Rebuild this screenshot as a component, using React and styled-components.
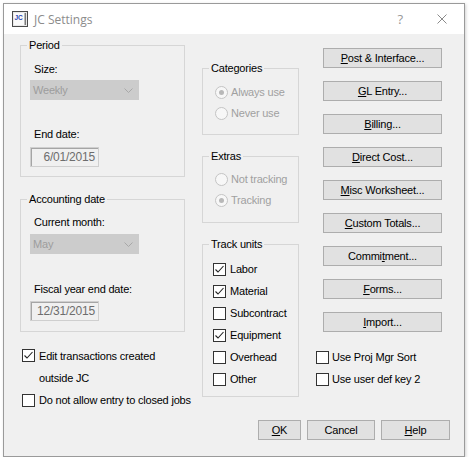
import React from 'react';
import styled, { createGlobalStyle } from 'styled-components';

const GlobalStyle = createGlobalStyle`
  html, body {
    margin: 0;
    padding: 0;
    background: #ffffff;
  }
  body {
    font-family: "Liberation Sans", Arial, sans-serif;
    font-size: 11px;
    letter-spacing: -0.2px;
    color: #000;
  }
`;

const Window = styled.div`
  margin: 3px 0 0 3px;
  width: 462px;
  height: 454px;
  box-sizing: border-box;
  border: 1px solid #9a9a9a;
  background: #f0f0f0;
  box-shadow: 1px 1px 3px rgba(0, 0, 0, 0.18);
  display: flex;
  flex-direction: column;
`;

const TitleBar = styled.div`
  height: 30px;
  background: #ffffff;
  display: flex;
  align-items: center;
  padding-left: 8px;
  flex-shrink: 0;
`;

const Title = styled.span`
  margin-left: 6px;
  font-family: "Open Sans", "Noto Sans", sans-serif;
  font-size: 12px;
  letter-spacing: 0;
  color: #8c8c8c;
`;

const TitleButtons = styled.div`
  margin-left: auto;
  display: flex;
  align-items: center;
  height: 100%;
`;

const HelpGlyph = styled.span`
  font-family: "Open Sans", sans-serif;
  font-size: 13px;
  color: #999;
  margin-right: 34px;
`;

const CloseGlyph = styled.svg`
  width: 10px;
  height: 10px;
  margin-right: 17px;
`;

const Body = styled.div`
  flex: 1;
  display: flex;
  flex-direction: column;
  padding-bottom: 16px;
`;

const Columns = styled.div`
  display: flex;
  padding-left: 16px;
`;

const LeftCol = styled.div`
  width: 165px;
  display: flex;
  flex-direction: column;
`;

const MidCol = styled.div`
  width: 97px;
  margin-left: 17px;
  display: flex;
  flex-direction: column;
`;

const RightCol = styled.div`
  width: 134px;
  margin-left: 17px;
  display: flex;
  flex-direction: column;
`;

const Group = styled.fieldset`
  margin: ${p => p.$top}px 0 0 0;
  padding: 0;
  border: 1px solid #d6d6d6;
  min-width: 0;
`;

const GroupBody = styled.div`
  padding: 0 0 ${p => p.$bottom}px ${p => p.$left || 9}px;
  display: flex;
  flex-direction: column;
  align-items: flex-start;
`;

const Legend = styled.legend`
  margin-left: 6px;
  padding: 0 2px;
  line-height: 13px;
  font-size: 11px;
`;

const FieldLabel = styled.div`
  margin: ${p => p.$top}px 0 0 4px;
  line-height: 13px;
`;

const Select = styled.div`
  margin-top: ${p => p.$top}px;
  width: 109px;
  height: 20px;
  box-sizing: border-box;
  background: #cccccc;
  color: #9d9d9d;
  display: flex;
  align-items: center;
  padding: 0 6px 0 3px;
  justify-content: space-between;
`;

const DateBox = styled.div`
  margin-top: ${p => p.$top}px;
  width: 69px;
  height: 20px;
  box-sizing: border-box;
  border: 1px solid #cfcfcf;
  box-shadow: inset 1px 1px 0 #a5a5a5;
  color: #6d6d6d;
  font-size: 12px;
  display: flex;
  align-items: center;
  justify-content: flex-end;
  padding-right: 3px;
`;

const Row = styled.div`
  display: flex;
  align-items: ${p => (p.$wrap ? 'flex-start' : 'center')};
  min-height: ${p => p.$h || 22}px;
  margin-top: ${p => p.$top || 0}px;
  margin-left: ${p => p.$left || 0}px;
  color: ${p => (p.$disabled ? '#a0a0a0' : '#000')};
  white-space: nowrap;
`;

const RowText = styled.span`
  margin-left: ${p => p.$gap || 4}px;
  line-height: ${p => p.$lh || 13}px;
`;

const Box = styled.span`
  width: 13px;
  height: 13px;
  box-sizing: border-box;
  border: 1px solid #333;
  background: #fff;
  flex-shrink: 0;
  margin-top: ${p => p.$top || 0}px;
  display: flex;
  align-items: center;
  justify-content: center;
`;

const Radio = styled.span`
  width: 13px;
  height: 13px;
  box-sizing: border-box;
  border-radius: 50%;
  border: 1px solid #c4c4c4;
  background: #f7f7f7;
  flex-shrink: 0;
  display: flex;
  align-items: center;
  justify-content: center;
  &::after {
    content: '';
    width: 5px;
    height: 5px;
    border-radius: 50%;
    background: ${p => (p.$on ? '#b8b8b8' : 'transparent')};
  }
`;

const Button = styled.div`
  width: ${p => p.$w || 119}px;
  height: 20px;
  box-sizing: border-box;
  margin-top: ${p => p.$top || 0}px;
  margin-left: ${p => p.$left || 0}px;
  background: #e1e1e1;
  border: 1px solid #adadad;
  display: flex;
  align-items: center;
  justify-content: center;
  font-size: 11px;
  color: #000;
  u {
    text-decoration: underline;
    text-underline-offset: 1px;
  }
`;

const Footer = styled.div`
  margin-top: auto;
  display: flex;
  justify-content: flex-end;
  padding-right: 14px;
`;

const Check = ({ on, top }) => (
  <Box $top={top}>
    {on && (
      <svg width="11" height="11" viewBox="0 0 11 11">
        <path d="M1.5 5.5 L4 8 L9.5 2" fill="none" stroke="#222" strokeWidth="1.1" />
      </svg>
    )}
  </Box>
);

const Chevron = () => (
  <svg width="9" height="5" viewBox="0 0 9 5">
    <path d="M0.5 0.5 L4.5 4.5 L8.5 0.5" fill="none" stroke="#a8a8a8" strokeWidth="1" />
  </svg>
);

const AppIcon = () => (
  <svg width="16" height="16" viewBox="0 0 16 16">
    <rect x="0.5" y="0.5" width="15" height="15" fill="#e8e8e8" stroke="#4a4a4a" />
    <rect x="2" y="2" width="12" height="12" fill="#fafafa" />
    <rect x="12.5" y="2" width="1.5" height="12" fill="#7a7a7a" />
    <text x="2.5" y="8.5" fontSize="6.5" fontWeight="bold" fill="#2846b4" fontFamily="Liberation Sans">JC</text>
  </svg>
);

const rightButtons = [
  ['P', 'ost & Interface...'],
  ['G', 'L Entry...'],
  ['B', 'illing...'],
  ['D', 'irect Cost...'],
  ['M', 'isc Worksheet...'],
  ['C', 'ustom Totals...'],
  ['Commi', 't', 'ment...'],
  ['F', 'orms...'],
  ['I', 'mport...'],
];

const trackUnits = [
  ['Labor', true],
  ['Material', true],
  ['Subcontract', false],
  ['Equipment', true],
  ['Overhead', false],
  ['Other', false],
];

export default function App() {
  return (
    <>
      <GlobalStyle />
      <Window>
        <TitleBar>
          <AppIcon />
          <Title>JC Settings</Title>
          <TitleButtons>
            <HelpGlyph>?</HelpGlyph>
            <CloseGlyph viewBox="0 0 10 10">
              <path d="M0.5 0.5 L9.5 9.5 M9.5 0.5 L0.5 9.5" stroke="#8a8a8a" strokeWidth="1" />
            </CloseGlyph>
          </TitleButtons>
        </TitleBar>
        <Body>
          <Columns>
            <LeftCol>
              <Group $top={5}>
                <Legend>Period</Legend>
                <GroupBody $bottom={9}>
                  <FieldLabel $top={11}>Size:</FieldLabel>
                  <Select $top={4}>
                    <span>Weekly</span>
                    <Chevron />
                  </Select>
                  <FieldLabel $top={28}>End date:</FieldLabel>
                  <DateBox $top={6}>6/01/2015</DateBox>
                </GroupBody>
              </Group>
              <Group $top={16}>
                <Legend>Accounting date</Legend>
                <GroupBody $bottom={10}>
                  <FieldLabel $top={10}>Current month:</FieldLabel>
                  <Select $top={5}>
                    <span>May</span>
                    <Chevron />
                  </Select>
                  <FieldLabel $top={29}>Fiscal year end date:</FieldLabel>
                  <DateBox $top={5}>12/31/2015</DateBox>
                </GroupBody>
              </Group>
              <Row $wrap $top={13} $left={2} $h={44}>
                <Check on top={4} />
                <RowText $lh={22}>
                  Edit transactions created
                  <br />
                  outside JC
                </RowText>
              </Row>
              <Row $left={2}>
                <Check />
                <RowText>Do not allow entry to closed jobs</RowText>
              </Row>
            </LeftCol>

            <MidCol>
              <Group $top={28}>
                <Legend>Categories</Legend>
                <GroupBody $bottom={10} $left={12}>
                  <Row $disabled $h={21} $top={7}>
                    <Radio $on />
                    <RowText $gap={3}>Always use</RowText>
                  </Row>
                  <Row $disabled $h={21}>
                    <Radio />
                    <RowText $gap={3}>Never use</RowText>
                  </Row>
                </GroupBody>
              </Group>
              <Group $top={15}>
                <Legend>Extras</Legend>
                <GroupBody $bottom={11} $left={12}>
                  <Row $disabled $h={21} $top={6}>
                    <Radio />
                    <RowText $gap={3}>Not tracking</RowText>
                  </Row>
                  <Row $disabled $h={21}>
                    <Radio $on />
                    <RowText $gap={3}>Tracking</RowText>
                  </Row>
                </GroupBody>
              </Group>
              <Group $top={15}>
                <Legend>Track units</Legend>
                <GroupBody $bottom={6} $left={10}>
                  {trackUnits.map(([label, on], i) => (
                    <Row key={label} $top={i === 0 ? 7 : 0}>
                      <Check on={on} />
                      <RowText>{label}</RowText>
                    </Row>
                  ))}
                </GroupBody>
              </Group>
            </MidCol>

            <RightCol>
              {rightButtons.map((parts, i) => (
                <Button key={parts.join('')} $left={7} $top={i === 0 ? 14 : 13}>
                  {parts.length === 3 ? (
                    <span>
                      {parts[0]}
                      <u>{parts[1]}</u>
                      {parts[2]}
                    </span>
                  ) : (
                    <span>
                      <u>{parts[0]}</u>
                      {parts[1]}
                    </span>
                  )}
                </Button>
              ))}
              <Row $top={14}>
                <Check />
                <RowText $gap={3}>Use Proj Mgr Sort</RowText>
              </Row>
              <Row>
                <Check />
                <RowText $gap={3}>Use user def key 2</RowText>
              </Row>
            </RightCol>
          </Columns>

          <Footer>
            <Button $w={43}>
              <span>
                <u>O</u>K
              </span>
            </Button>
            <Button $w={68} $left={6}>
              Cancel
            </Button>
            <Button $w={69} $left={6}>
              <span>
                <u>H</u>elp
              </span>
            </Button>
          </Footer>
        </Body>
      </Window>
    </>
  );
}
